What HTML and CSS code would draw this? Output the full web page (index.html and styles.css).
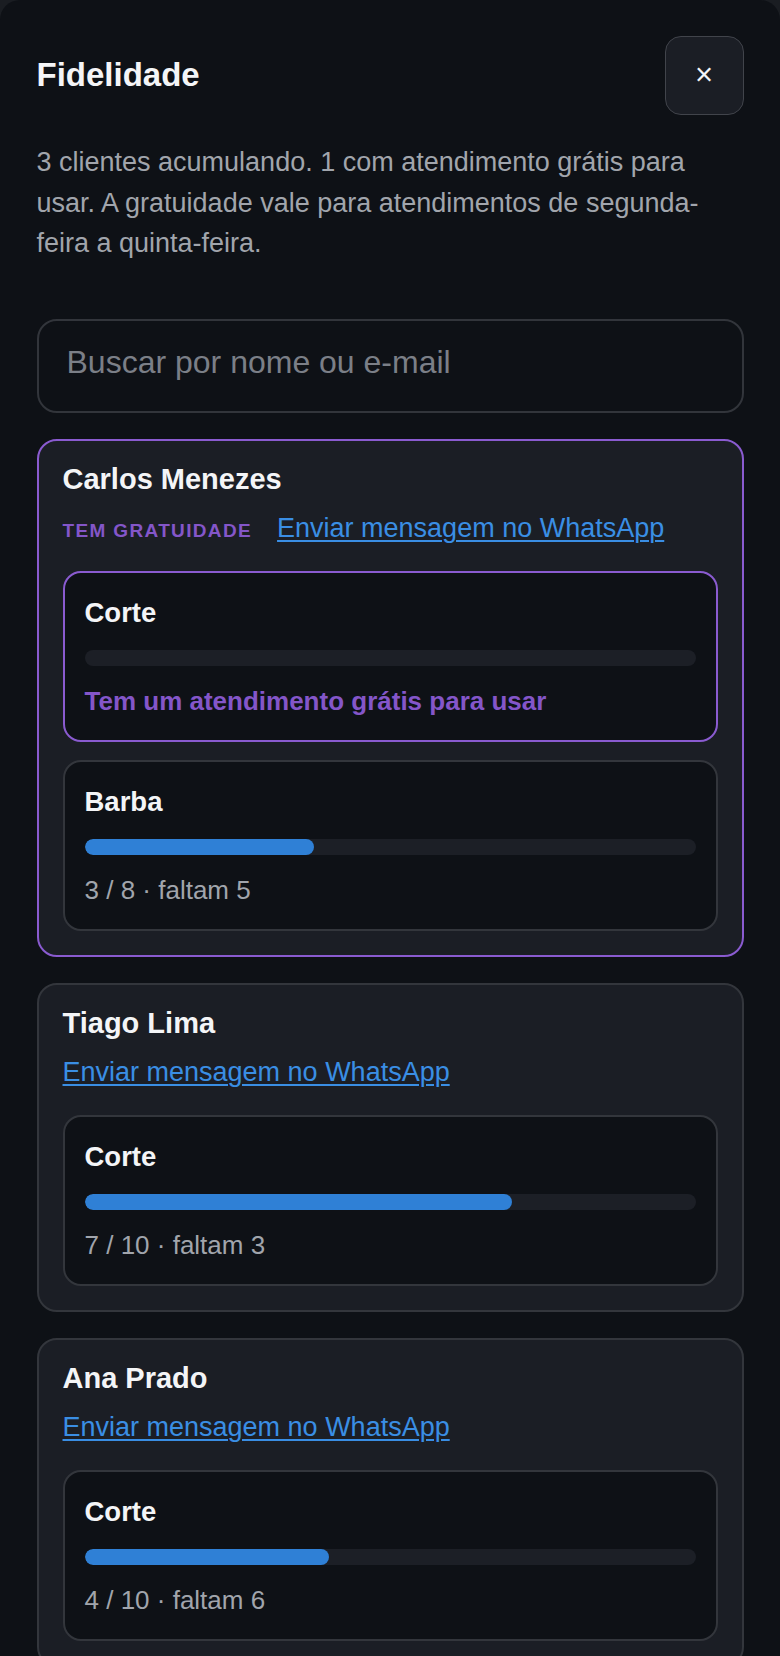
FILE: index.html
```html
<!DOCTYPE html>
<html lang="pt-BR">
<head>
<meta charset="utf-8">
<title>Fidelidade</title>
<link rel="stylesheet" href="styles.css">
</head>
<body>
<div class="sheet">
  <header class="sheet-head">
    <h2 class="title">Fidelidade</h2>
    <button class="close" type="button" aria-label="Fechar">×</button>
  </header>
  <p class="intro">3 clientes acumulando. 1 com atendimento grátis para usar. A gratuidade vale para atendimentos de segunda-feira a quinta-feira.</p>
  <div class="list">
    <input class="search" type="text" placeholder="Buscar por nome ou e-mail">

    <article class="client client--free">
      <h3 class="client-name">Carlos Menezes</h3>
      <div class="client-meta">
        <span class="badge">Tem gratuidade</span>
        <a class="wa" href="#">Enviar mensagem no WhatsApp</a>
      </div>
      <div class="services">
        <div class="service service--free">
          <div class="service-name">Corte</div>
          <div class="bar"><div class="bar-fill" style="width:0%"></div></div>
          <div class="service-note service-note--free">Tem um atendimento grátis para usar</div>
        </div>
        <div class="service">
          <div class="service-name">Barba</div>
          <div class="bar"><div class="bar-fill" style="width:37.5%"></div></div>
          <div class="service-note">3 / 8 · faltam 5</div>
        </div>
      </div>
    </article>

    <article class="client">
      <h3 class="client-name">Tiago Lima</h3>
      <div class="client-meta">
        <a class="wa" href="#">Enviar mensagem no WhatsApp</a>
      </div>
      <div class="services">
        <div class="service">
          <div class="service-name">Corte</div>
          <div class="bar"><div class="bar-fill" style="width:70%"></div></div>
          <div class="service-note">7 / 10 · faltam 3</div>
        </div>
      </div>
    </article>

    <article class="client">
      <h3 class="client-name">Ana Prado</h3>
      <div class="client-meta">
        <a class="wa" href="#">Enviar mensagem no WhatsApp</a>
      </div>
      <div class="services">
        <div class="service">
          <div class="service-name">Corte</div>
          <div class="bar"><div class="bar-fill" style="width:40%"></div></div>
          <div class="service-note">4 / 10 · faltam 6</div>
        </div>
      </div>
    </article>
  </div>
</div>
</body>
</html>
```

FILE: styles.css
```css
* { box-sizing: border-box; }

html, body {
  margin: 0;
  padding: 0;
}

body {
  background: #1a1d22;
  font-family: "Liberation Sans", Arial, sans-serif;
  color: #f2f3f5;
}

.sheet {
  background: #0e1116;
  border-radius: 20px 20px 0 0;
  padding: 36px 36.5px 40px;
  min-height: 100vh;
}

.sheet-head {
  display: flex;
  align-items: center;
  justify-content: space-between;
}

.title {
  margin: 0;
  font-size: 33px;
  line-height: 1.2;
  font-weight: 700;
  color: #f4f5f7;
  position: relative;
  top: -1px;
}

.close {
  width: 79px;
  height: 79px;
  flex: none;
  border: 1.5px solid #41444b;
  border-radius: 16px;
  background: #1b1e25;
  color: #f4f5f7;
  font-family: "Liberation Sans", Arial, sans-serif;
  font-size: 31px;
  line-height: 1;
  padding: 0 0 3px;
  display: flex;
  align-items: center;
  justify-content: center;
}

.intro {
  margin: 27px 0 55.5px;
  font-size: 27px;
  line-height: 40.5px;
  color: #a1a5ac;
}

.list {
  display: flex;
  flex-direction: column;
  gap: 26px;
}

.search {
  display: block;
  width: 100%;
  height: 94px;
  border: 2px solid #32353b;
  border-radius: 20px;
  background: transparent;
  padding: 0 28px 7px;
  font-family: "Liberation Sans", Arial, sans-serif;
  font-size: 32px;
  color: #e8e9ec;
  outline: none;
}

.search::placeholder {
  color: #7b7f87;
}

.client {
  background: #1b1e25;
  border: 2px solid #33363c;
  border-radius: 20px;
  padding: 22px 24px 24.5px;
}

.client--free {
  border-color: #8a5bd0;
}

.client-name {
  margin: 0;
  font-size: 29px;
  line-height: normal;
  font-weight: 700;
  color: #f4f5f7;
}

.client-meta {
  display: flex;
  align-items: baseline;
  gap: 25px;
  margin-top: 17px;
}

.badge {
  font-size: 19px;
  font-weight: 700;
  letter-spacing: 1.35px;
  text-transform: uppercase;
  color: #8456c9;
}

.wa {
  font-size: 27px;
  line-height: normal;
  color: #3a8ee4;
  text-decoration: underline;
  text-decoration-thickness: 1.5px;
  text-underline-offset: 3px;
}

.services {
  display: flex;
  flex-direction: column;
  gap: 18px;
  margin-top: 26.5px;
}

.service {
  background: #0e1116;
  border: 2px solid #33363c;
  border-radius: 18px;
  padding: 24.5px 20px 22.5px;
  display: flex;
  flex-direction: column;
  gap: 20.5px;
}

.service--free {
  border-color: #8a5bd0;
}

.service-name {
  font-size: 27.5px;
  line-height: normal;
  font-weight: 700;
  color: #f4f5f7;
}

.bar {
  height: 16px;
  border-radius: 8px;
  background: #1c1f26;
  overflow: hidden;
}

.bar-fill {
  height: 100%;
  border-radius: 8px;
  background: #2f80d6;
}

.service-note {
  font-size: 26px;
  line-height: normal;
  color: #a1a5ac;
}

.service-note--free {
  font-weight: 700;
  color: #8456c9;
}
```
